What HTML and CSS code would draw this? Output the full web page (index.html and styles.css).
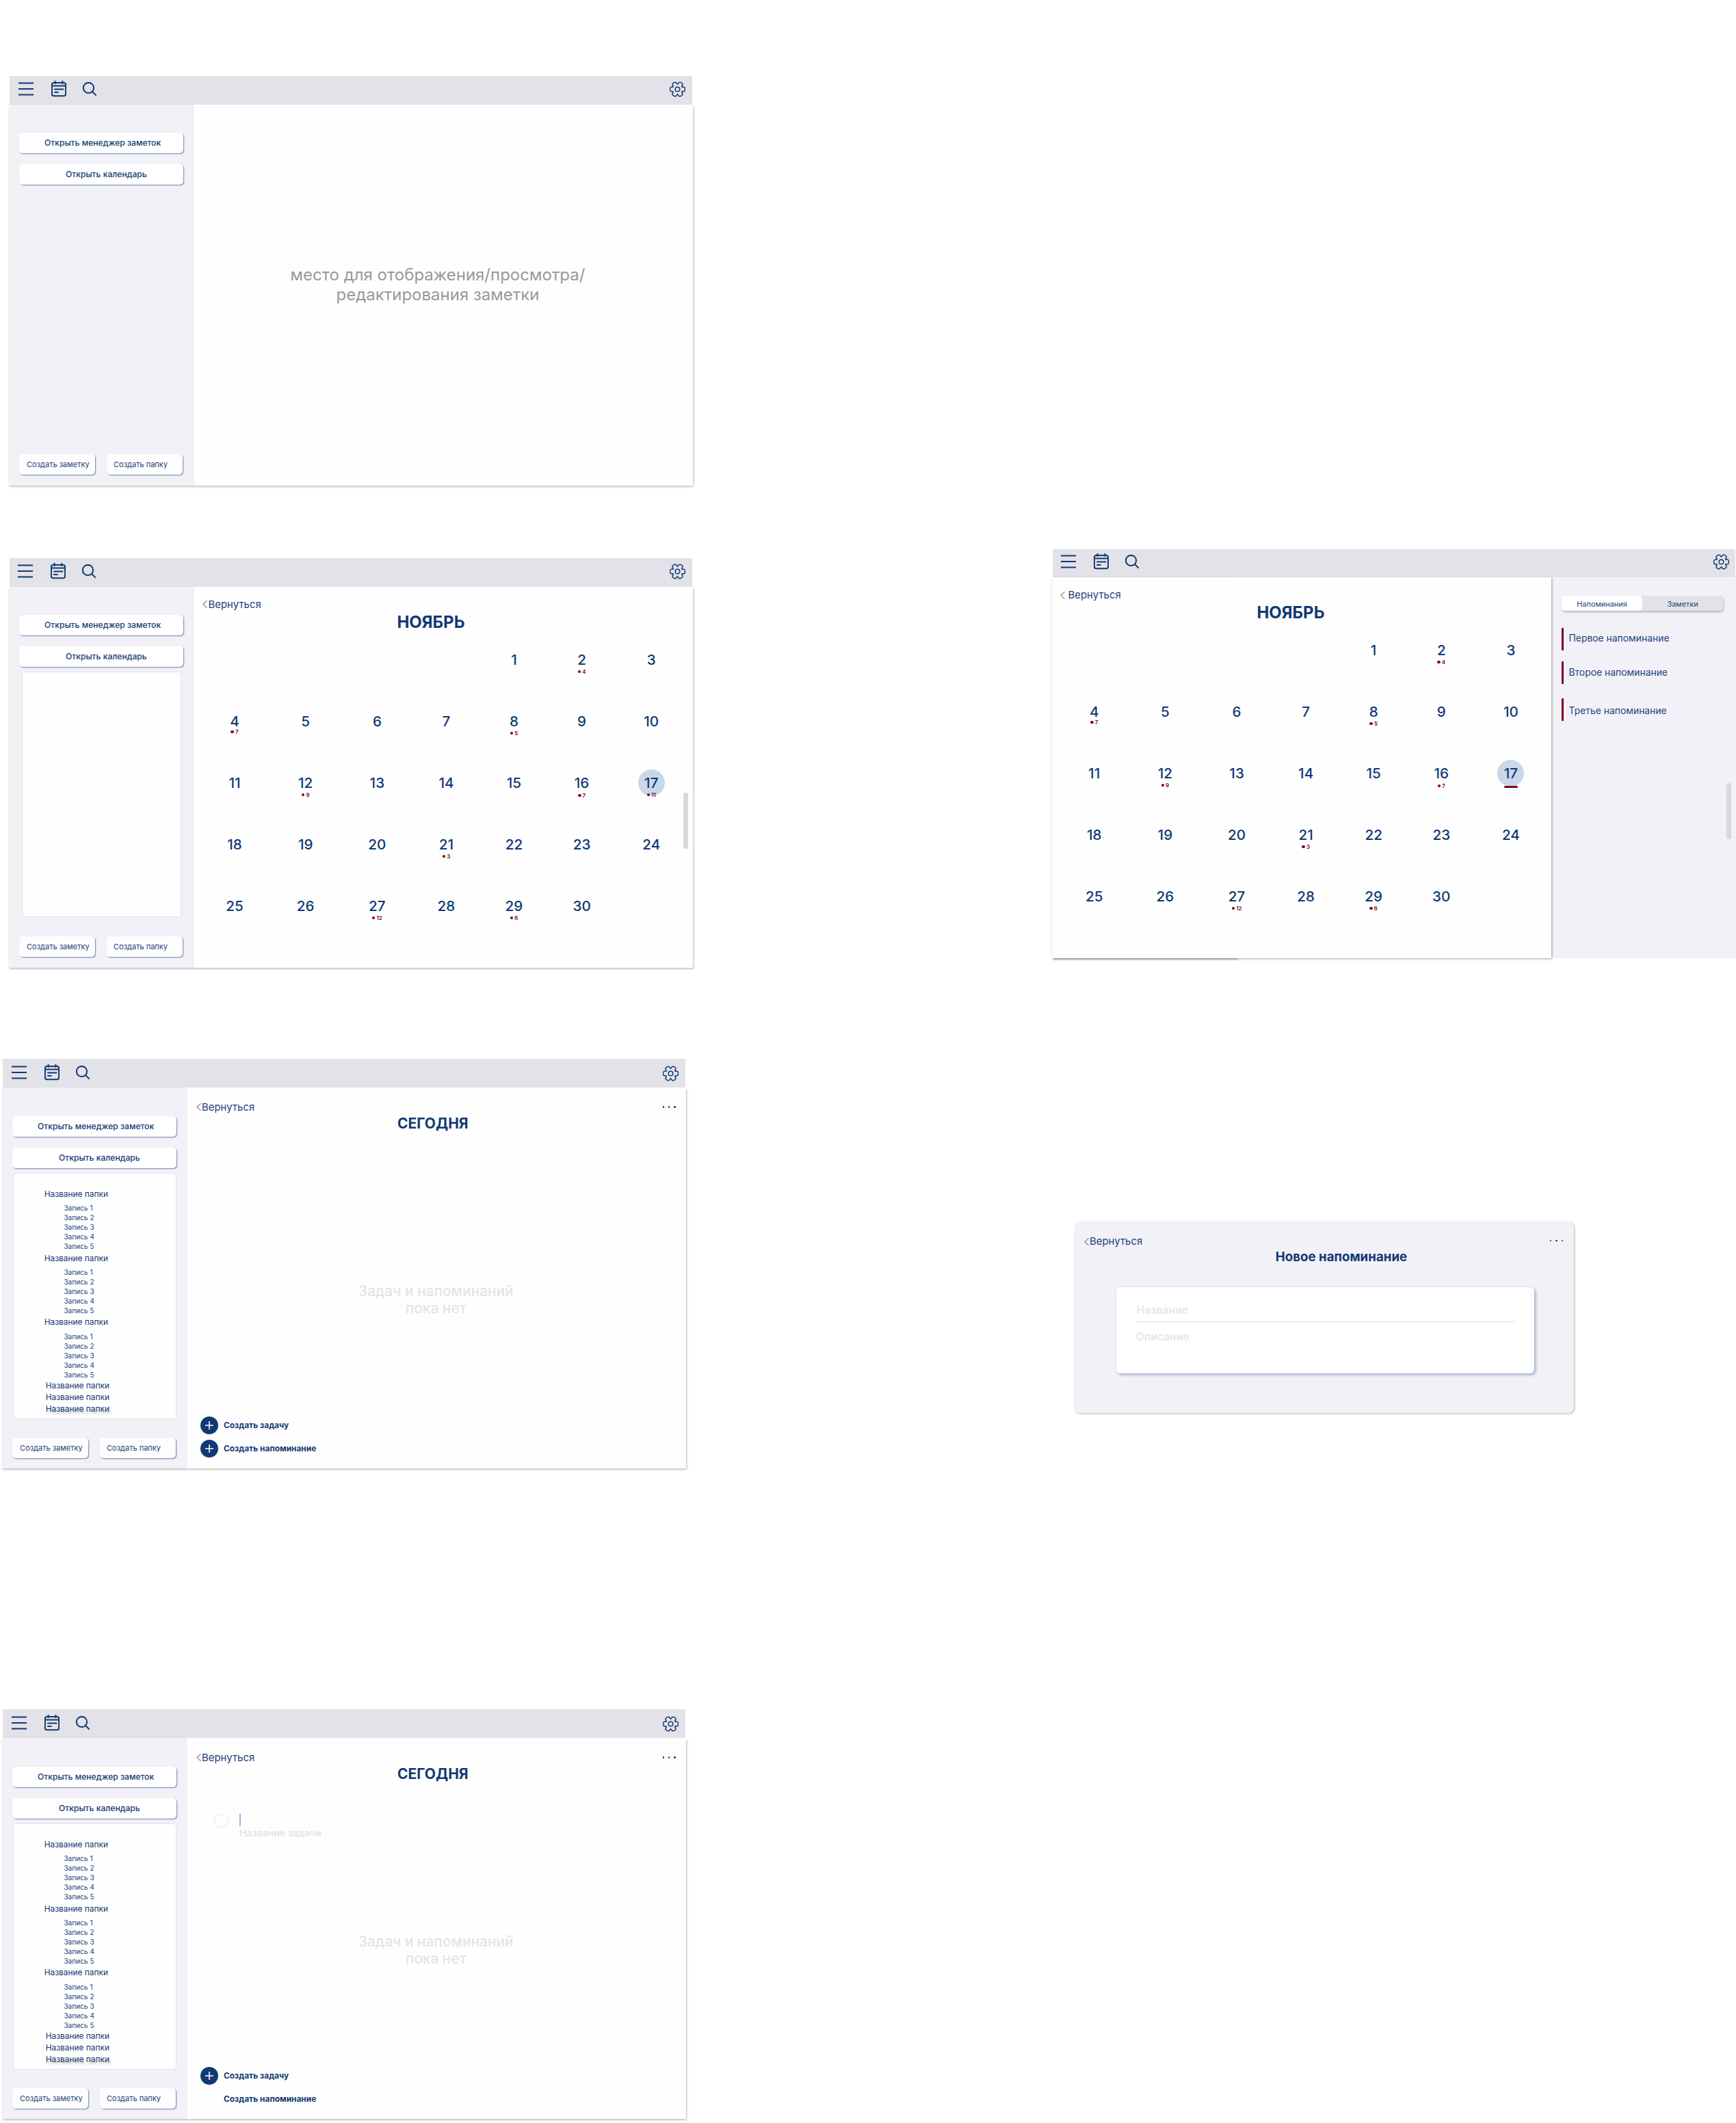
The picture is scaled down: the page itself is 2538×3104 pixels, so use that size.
FILE: index.html
```html
<!DOCTYPE html>
<html lang="ru">
<head>
<meta charset="utf-8">
<title>Заметки и календарь</title>
<link rel="stylesheet" href="styles.css">
</head>
<body>
<svg class="defs" aria-hidden="true">
  <symbol id="i-menu" viewBox="0 0 22 24"><path d="M0 3.4H22M0 12H22M0 20.6H22"/></symbol>
  <symbol id="i-cal" viewBox="0 0 22 24"><rect x=".9" y="3" width="20.2" height="19.2" rx="2.8"/><path d="M1 7.6H21M5.6 .4V4M16.4 .4V4M5 12.5H17.5M5 17H9.8"/></symbol>
  <symbol id="i-search" viewBox="0 0 20 20"><circle cx="8.5" cy="8.5" r="7.6"/><path d="M14 14L19.6 19.4"/></symbol>
  <symbol id="i-gear" viewBox="-11.5 -11.5 23 23">
    <g id="lobe"><path d="M6.5 -3.75C7.2 -2.6 8.6 -3.6 9.6 -3.1Q10.9 -2.6 10.9 -1.2V1.2Q10.9 2.6 9.6 3.1C8.6 3.6 7.2 2.6 6.5 3.75"/></g>
    <use href="#lobe" transform="rotate(60)"/><use href="#lobe" transform="rotate(120)"/><use href="#lobe" transform="rotate(180)"/><use href="#lobe" transform="rotate(240)"/><use href="#lobe" transform="rotate(300)"/>
    <circle r="3.3"/>
  </symbol>
  <symbol id="i-back" viewBox="0 0 7 11"><path d="M6.3 .5L1 5.5L6.3 10.5"/></symbol>
  <symbol id="i-plus" viewBox="0 0 26 26"><path d="M13 7V19M7 13H19"/></symbol>
</svg>

<section class="frame f-empty">
  <header class="bar"><svg class="menu"><use href="#i-menu"/></svg><svg class="cal"><use href="#i-cal"/></svg><svg class="search"><use href="#i-search"/></svg><svg class="gear"><use href="#i-gear"/></svg></header>
  <div class="body">
    <aside class="side">
      <button class="wide manager">Открыть менеджер заметок</button>
      <button class="wide calendar">Открыть календарь</button>
      <div class="create"><button class="note">Создать заметку</button><button class="dir">Создать папку</button></div>
    </aside>
    <main class="main"><p class="hint">место для отображения/просмотра/<br>редактирования заметки</p></main>
  </div>
</section>

<section class="frame f-month">
  <header class="bar"><svg class="menu"><use href="#i-menu"/></svg><svg class="cal"><use href="#i-cal"/></svg><svg class="search"><use href="#i-search"/></svg><svg class="gear"><use href="#i-gear"/></svg></header>
  <div class="body">
    <aside class="side">
      <button class="wide manager">Открыть менеджер заметок</button>
      <button class="wide calendar">Открыть календарь</button>
      <div class="panel"></div>
      <div class="create"><button class="note">Создать заметку</button><button class="dir">Создать папку</button></div>
    </aside>
    <main class="main">
      <a class="back"><svg><use href="#i-back"/></svg>Вернуться</a>
      <h1 class="month">НОЯБРЬ</h1>
      <div class="grid">
        <div class="day first">1</div><div class="day">2<i>4</i></div><div class="day">3</div>
        <div class="day up">4<i>7</i></div><div class="day">5</div><div class="day">6</div><div class="day">7</div><div class="day">8<i>5</i></div><div class="day">9</div><div class="day">10</div>
        <div class="day">11</div><div class="day">12<i>9</i></div><div class="day">13</div><div class="day">14</div><div class="day">15</div><div class="day down">16<i>7</i></div><div class="day today">17<i>11</i></div>
        <div class="day">18</div><div class="day">19</div><div class="day">20</div><div class="day">21<i>3</i></div><div class="day">22</div><div class="day">23</div><div class="day">24</div>
        <div class="day">25</div><div class="day">26</div><div class="day">27<i>12</i></div><div class="day">28</div><div class="day">29<i>6</i></div><div class="day">30</div>
      </div>
    </main>
    <div class="scroll"></div>
  </div>
</section>

<section class="frame f-day">
  <header class="bar"><svg class="menu"><use href="#i-menu"/></svg><svg class="cal"><use href="#i-cal"/></svg><svg class="search"><use href="#i-search"/></svg><svg class="gear"><use href="#i-gear"/></svg></header>
  <div class="body">
    <aside class="side">
      <button class="wide manager">Открыть менеджер заметок</button>
      <button class="wide calendar">Открыть календарь</button>
      <div class="panel">
        <h3>Название папки</h3><ul><li>Запись 1</li><li>Запись 2</li><li>Запись 3</li><li>Запись 4</li><li>Запись 5</li></ul>
        <h3>Название папки</h3><ul><li>Запись 1</li><li>Запись 2</li><li>Запись 3</li><li>Запись 4</li><li>Запись 5</li></ul>
        <h3>Название папки</h3><ul><li>Запись 1</li><li>Запись 2</li><li>Запись 3</li><li>Запись 4</li><li>Запись 5</li></ul>
        <h4>Название папки</h4><h4>Название папки</h4><h4 class="last">Название папки</h4>
      </div>
      <div class="create"><button class="note">Создать заметку</button><button class="dir">Создать папку</button></div>
    </aside>
    <main class="main">
      <div class="top"><a class="back"><svg><use href="#i-back"/></svg>Вернуться</a><span class="dots"><b></b><b></b><b></b></span></div>
      <h1 class="today-title">СЕГОДНЯ</h1>
      <p class="none">Задач и напоминаний<br>пока нет</p>
      <div class="actions">
        <div class="act"><svg><use href="#i-plus"/></svg>Создать задачу</div>
        <div class="act"><svg><use href="#i-plus"/></svg>Создать напоминание</div>
      </div>
    </main>
  </div>
</section>

<section class="frame f-task f-day">
  <header class="bar"><svg class="menu"><use href="#i-menu"/></svg><svg class="cal"><use href="#i-cal"/></svg><svg class="search"><use href="#i-search"/></svg><svg class="gear"><use href="#i-gear"/></svg></header>
  <div class="body">
    <aside class="side">
      <button class="wide manager">Открыть менеджер заметок</button>
      <button class="wide calendar">Открыть календарь</button>
      <div class="panel">
        <h3>Название папки</h3><ul><li>Запись 1</li><li>Запись 2</li><li>Запись 3</li><li>Запись 4</li><li>Запись 5</li></ul>
        <h3>Название папки</h3><ul><li>Запись 1</li><li>Запись 2</li><li>Запись 3</li><li>Запись 4</li><li>Запись 5</li></ul>
        <h3>Название папки</h3><ul><li>Запись 1</li><li>Запись 2</li><li>Запись 3</li><li>Запись 4</li><li>Запись 5</li></ul>
        <h4>Название папки</h4><h4>Название папки</h4><h4 class="last">Название папки</h4>
      </div>
      <div class="create"><button class="note">Создать заметку</button><button class="dir">Создать папку</button></div>
    </aside>
    <main class="main">
      <div class="top"><a class="back"><svg><use href="#i-back"/></svg>Вернуться</a><span class="dots"><b></b><b></b><b></b></span></div>
      <h1 class="today-title">СЕГОДНЯ</h1>
      <div class="task"><span class="check"></span><div class="field"><span class="caret"></span><span class="ph">Название задачи</span></div></div>
      <p class="none">Задач и напоминаний<br>пока нет</p>
      <div class="actions">
        <div class="act"><svg><use href="#i-plus"/></svg>Создать задачу</div>
        <div class="act bare">Создать напоминание</div>
      </div>
    </main>
  </div>
</section>

<section class="frame f-remind">
  <header class="bar"><svg class="menu"><use href="#i-menu"/></svg><svg class="cal"><use href="#i-cal"/></svg><svg class="search"><use href="#i-search"/></svg><svg class="gear"><use href="#i-gear"/></svg></header>
  <div class="body">
    <div class="under"></div>
    <main class="main">
      <a class="back"><svg><use href="#i-back"/></svg>Вернуться</a>
      <h1 class="month">НОЯБРЬ</h1>
      <div class="grid">
        <div class="day first">1</div><div class="day">2<i>4</i></div><div class="day">3</div>
        <div class="day up">4<i>7</i></div><div class="day">5</div><div class="day">6</div><div class="day">7</div><div class="day">8<i>5</i></div><div class="day">9</div><div class="day">10</div>
        <div class="day">11</div><div class="day">12<i>9</i></div><div class="day">13</div><div class="day">14</div><div class="day">15</div><div class="day down">16<i>7</i></div><div class="day today">17<u></u></div>
        <div class="day">18</div><div class="day">19</div><div class="day">20</div><div class="day">21<i>3</i></div><div class="day">22</div><div class="day">23</div><div class="day">24</div>
        <div class="day">25</div><div class="day">26</div><div class="day">27<i>12</i></div><div class="day">28</div><div class="day">29<i>6</i></div><div class="day">30</div>
      </div>
    </main>
    <aside class="reminders">
      <div class="tabs"><span class="on">Напоминания</span><span>Заметки</span></div>
      <div class="rem r1">Первое напоминание</div>
      <div class="rem r2">Второе напоминание</div>
      <div class="rem r3">Третье напоминание</div>
    </aside>
    <div class="scroll"></div>
  </div>
</section>

<section class="dialog">
  <div class="top"><a class="back"><svg><use href="#i-back"/></svg>Вернуться</a><span class="dots"><b></b><b></b><b></b></span></div>
  <h2>Новое напоминание</h2>
  <div class="card"><div class="name">Название</div><div class="desc">Описание</div></div>
</section>
</body>
</html>
```
FILE: styles.css
```css
* { box-sizing: border-box; }
body { margin: 0; width: 2538px; height: 3104px; position: relative; overflow: hidden; background: #fff; color: #113974; font-family: Inter, "Liberation Sans", sans-serif; }
h1, h2, h3, h4, p, ul { margin: 0; padding: 0; }
ul { list-style: none; }
svg { fill: none; stroke: #113974; stroke-linecap: round; stroke-linejoin: round; flex: none; display: block; }
.defs { position: absolute; width: 0; height: 0; }

/* windows on the board */
.frame { position: absolute; width: 1000px; }
.f-empty { left: 12.5px; top: 110.5px; }
.f-month { left: 12.5px; top: 815.5px; }
.f-day { left: 2.5px; top: 1548.4px; }
.f-task { top: 2499.4px; }
.f-remind { left: 1537.5px; top: 802.5px; }

.bar { height: 42px; width: 998.5px; margin-left: 1px; padding: 7.5px 10px 0 13.5px; background: #e3e2e8; display: flex; align-items: flex-start; }
.bar .menu { width: 22px; height: 24px; stroke-width: 2; stroke-linecap: butt; margin-right: 26px; }
.bar .cal { width: 22px; height: 24px; stroke-width: 2; margin-right: 24px; }
.bar .search { width: 20px; height: 20px; stroke-width: 2; margin-top: 1.7px; }
.bar .gear { width: 23px; height: 23px; stroke-width: 1.5; margin: 1.2px 0 0 auto; }
.f-month .bar { padding-left: 12.5px; }
.f-day .bar { padding-top: 8.1px; }
.f-remind .bar { padding: 6.5px 9.5px 0 12.5px; }

.body { position: relative; height: 557px; display: flex; background: #fefefe; box-shadow: 1px 1.5px 3px rgba(0,0,0,.28); }
.side { width: 269.5px; flex: none; background: #f2f1f8; padding: 41.5px 0 15.5px 15.5px; display: flex; flex-direction: column; box-shadow: 1px 0 1.5px rgba(0,0,0,.1); }
button { font-family: inherit; color: #1d437c; border: 0; border-radius: 5px; background: #fff; box-shadow: 1px 1px 1.5px rgba(17,57,116,.6); height: 30px; padding: 0; text-align: left; white-space: nowrap; }
.wide { width: 240px; font-size: 12.1px; font-weight: 500; flex: none; color: #113974; padding-bottom: 1px; }
.f-day .wide { padding-bottom: 0; }
.manager { padding-left: 37px; }
.calendar { padding-left: 68px; margin-top: 16px; }
.create { margin-top: auto; display: flex; gap: 17px; }
.create button { width: 111px; font-size: 11px; background: #fdfdfd; }
.note { padding-left: 11px; }
.create .dir { padding-left: 10px; }
.panel { margin: 7px 0 0 3.7px; width: 233.5px; height: 359px; background: #fefefe; border: 1px solid #e3e2ea; border-radius: 4px; }
.f-day .panel { margin-left: .7px; width: 239px; height: 360.5px; padding-top: 20px; }
.panel h3 { font-size: 11.9px; font-weight: 400; line-height: 20px; padding-left: 45px; }
.panel ul { padding: 3.3px 0 .5px 73.7px; font-size: 10.1px; line-height: 14px; color: #1d437c; }
.panel h4 { font-size: 11.9px; font-weight: 400; line-height: 17px; padding-left: 47px; }
.panel .last { text-shadow: 2px 3px 3px rgba(0,0,0,.25); }

.main { flex: 1; min-width: 0; display: flex; flex-direction: column; }
.hint { margin-top: 234.7px; padding-right: 14.5px; font-size: 24px; line-height: 29.3px; color: #999; text-align: center; }

.back { display: flex; align-items: center; height: 18px; font-size: 14.9px; line-height: 18px; color: #1d437c; margin: 17px 0 0 14px; }
.back svg { width: 7px; height: 11px; stroke: #8a8a90; stroke-width: 1.1; margin-right: 1.5px; }
.month { width: 696px; margin-top: 2.5px; font-size: 24px; line-height: 30px; font-weight: 700; text-align: center; }
.grid { margin: 27.5px 0 0 9px; display: grid; grid-template-columns: 104px 103.4px 106px 96.2px 101.8px 96.4px 107px; grid-auto-rows: 90px; }
.day { font-size: 20.7px; line-height: 24px; font-weight: 500; text-align: center; position: relative; }
.first { grid-column: 5; }
.day i { display: flex; justify-content: center; align-items: center; gap: 2px; margin-top: 1.5px; font: 600 8px/8px Inter, sans-serif; color: #80001f; }
.day i::before { content: ""; width: 4.5px; height: 4.5px; border-radius: 50%; background: #80001f; }
.up i { margin-top: -.5px; }
.down i { margin-top: 2.5px; }
.today { z-index: 0; }
.today::before { content: ""; position: absolute; z-index: -1; left: 34px; top: -8px; width: 39px; height: 39px; border-radius: 50%; background: #c8d8e8; }
.day u { display: block; width: 20px; height: 3px; margin: 6px auto 0; border-radius: 2px; background: #80001f; }
.scroll { position: absolute; right: 7px; top: 301.5px; width: 7px; height: 82px; border-radius: 3px; background: #d9d9d9; }

.top { display: flex; justify-content: space-between; }
.f-day .back { margin: 19.2px 0 0 14.5px; }
.dots { display: flex; gap: 6px; margin: 27px 15px 0 0; }
.dots b { width: 2.3px; height: 2.3px; border-radius: 50%; background: #333; }
.today-title { margin-top: .8px; width: 721.5px; font-size: 21px; line-height: 30px; font-weight: 700; text-align: center; }
.none { margin-top: 216.5px; font-size: 20.9px; line-height: 25px; font-weight: 500; color: #e4e3ea; text-align: center; }
.actions { margin-top: auto; padding: 0 0 16.8px 21px; display: flex; flex-direction: column; gap: 8px; }
.act { display: flex; align-items: center; height: 26px; gap: 8px; font-size: 11.9px; font-weight: 700; line-height: 16px; }
.act svg { width: 26px; height: 26px; border-radius: 50%; background: #113974; stroke: #fff; stroke-width: 1.6; stroke-linecap: butt; }
.bare { padding-left: 34px; }
.task { margin: 42.5px 0 0 41px; height: 38px; display: flex; gap: 16px; }
.check { width: 21px; height: 21px; border: 1px solid #e2e1e8; border-radius: 50%; }
.field { display: flex; flex-direction: column; }
.caret { width: 2px; height: 21px; background: #88b8f0; }
.ph { font-size: 14px; font-weight: 600; line-height: 20px; color: #e4e3ea; }
.f-task .none { margin-top: 136px; }

.f-remind .bar { height: 41px; }
.f-remind .body { width: 1000.5px; height: 557.5px; box-shadow: none; background: #f2f1f8; }
.f-remind .main { flex: none; width: 730.5px; background: #fefefe; box-shadow: 1px 1px 3px rgba(0,0,0,.35); position: relative; }
.under { position: absolute; left: 1px; top: 0; width: 270px; height: 557.5px; box-shadow: 1px 1.5px 3px rgba(0,0,0,.35); }
.f-remind .back { margin: 17.5px 0 0 12.5px; }
.f-remind .back svg { margin-right: 4.5px; }
.f-remind .month { width: 699px; margin-top: 2px; }
.f-remind .grid { margin: 27.5px 0 0 10.2px; }
.reminders { padding: 27px 0 0 15px; }
.tabs { display: flex; width: 236px; height: 22px; border-radius: 5px; background: #e3e2e8; box-shadow: 1px 2px 3px rgba(0,0,0,.25); font-size: 10.9px; line-height: 25px; text-align: center; color: #1d437c; }
.tabs span { flex: 1; }
.tabs .on { background: #fff; border-radius: 5px; }
.rem { height: 33px; border-left: 3px solid #80001f; border-radius: 1px; padding-left: 7.5px; font-size: 13.9px; line-height: 30.5px; color: #1d437c; }
.r1 { margin-top: 25px; }
.r2 { margin-top: 16px; line-height: 32px; }
.r3 { margin-top: 21px; line-height: 36px; }
.f-remind .scroll { right: 7px; }

.dialog { position: absolute; left: 1570.5px; top: 1786px; width: 730.5px; height: 280px; border-radius: 8px; background: #f2f1f8; box-shadow: 1px 1px 3px rgba(0,0,0,.3); }
.dialog .back { margin: 20px 0 0 14px; }
.dialog .dots { margin-right: 16px; }
.dialog h2 { width: 781px; font-size: 18.7px; line-height: 26px; margin-top: .5px; text-align: center; }
.dialog .card { width: 611px; height: 126px; margin: 31.5px 0 0 61px; background: #fff; border-radius: 6px; box-shadow: 2px 2px 4px rgba(17,57,116,.4); padding: 20px 27.5px 20px 29px; font-size: 15.9px; font-weight: 500; line-height: 27px; color: #e4e3ea; }
.name { border-bottom: 1px solid #dfdee8; height: 31px; padding-left: 1px; }
.desc { margin-top: 8px; }
```
